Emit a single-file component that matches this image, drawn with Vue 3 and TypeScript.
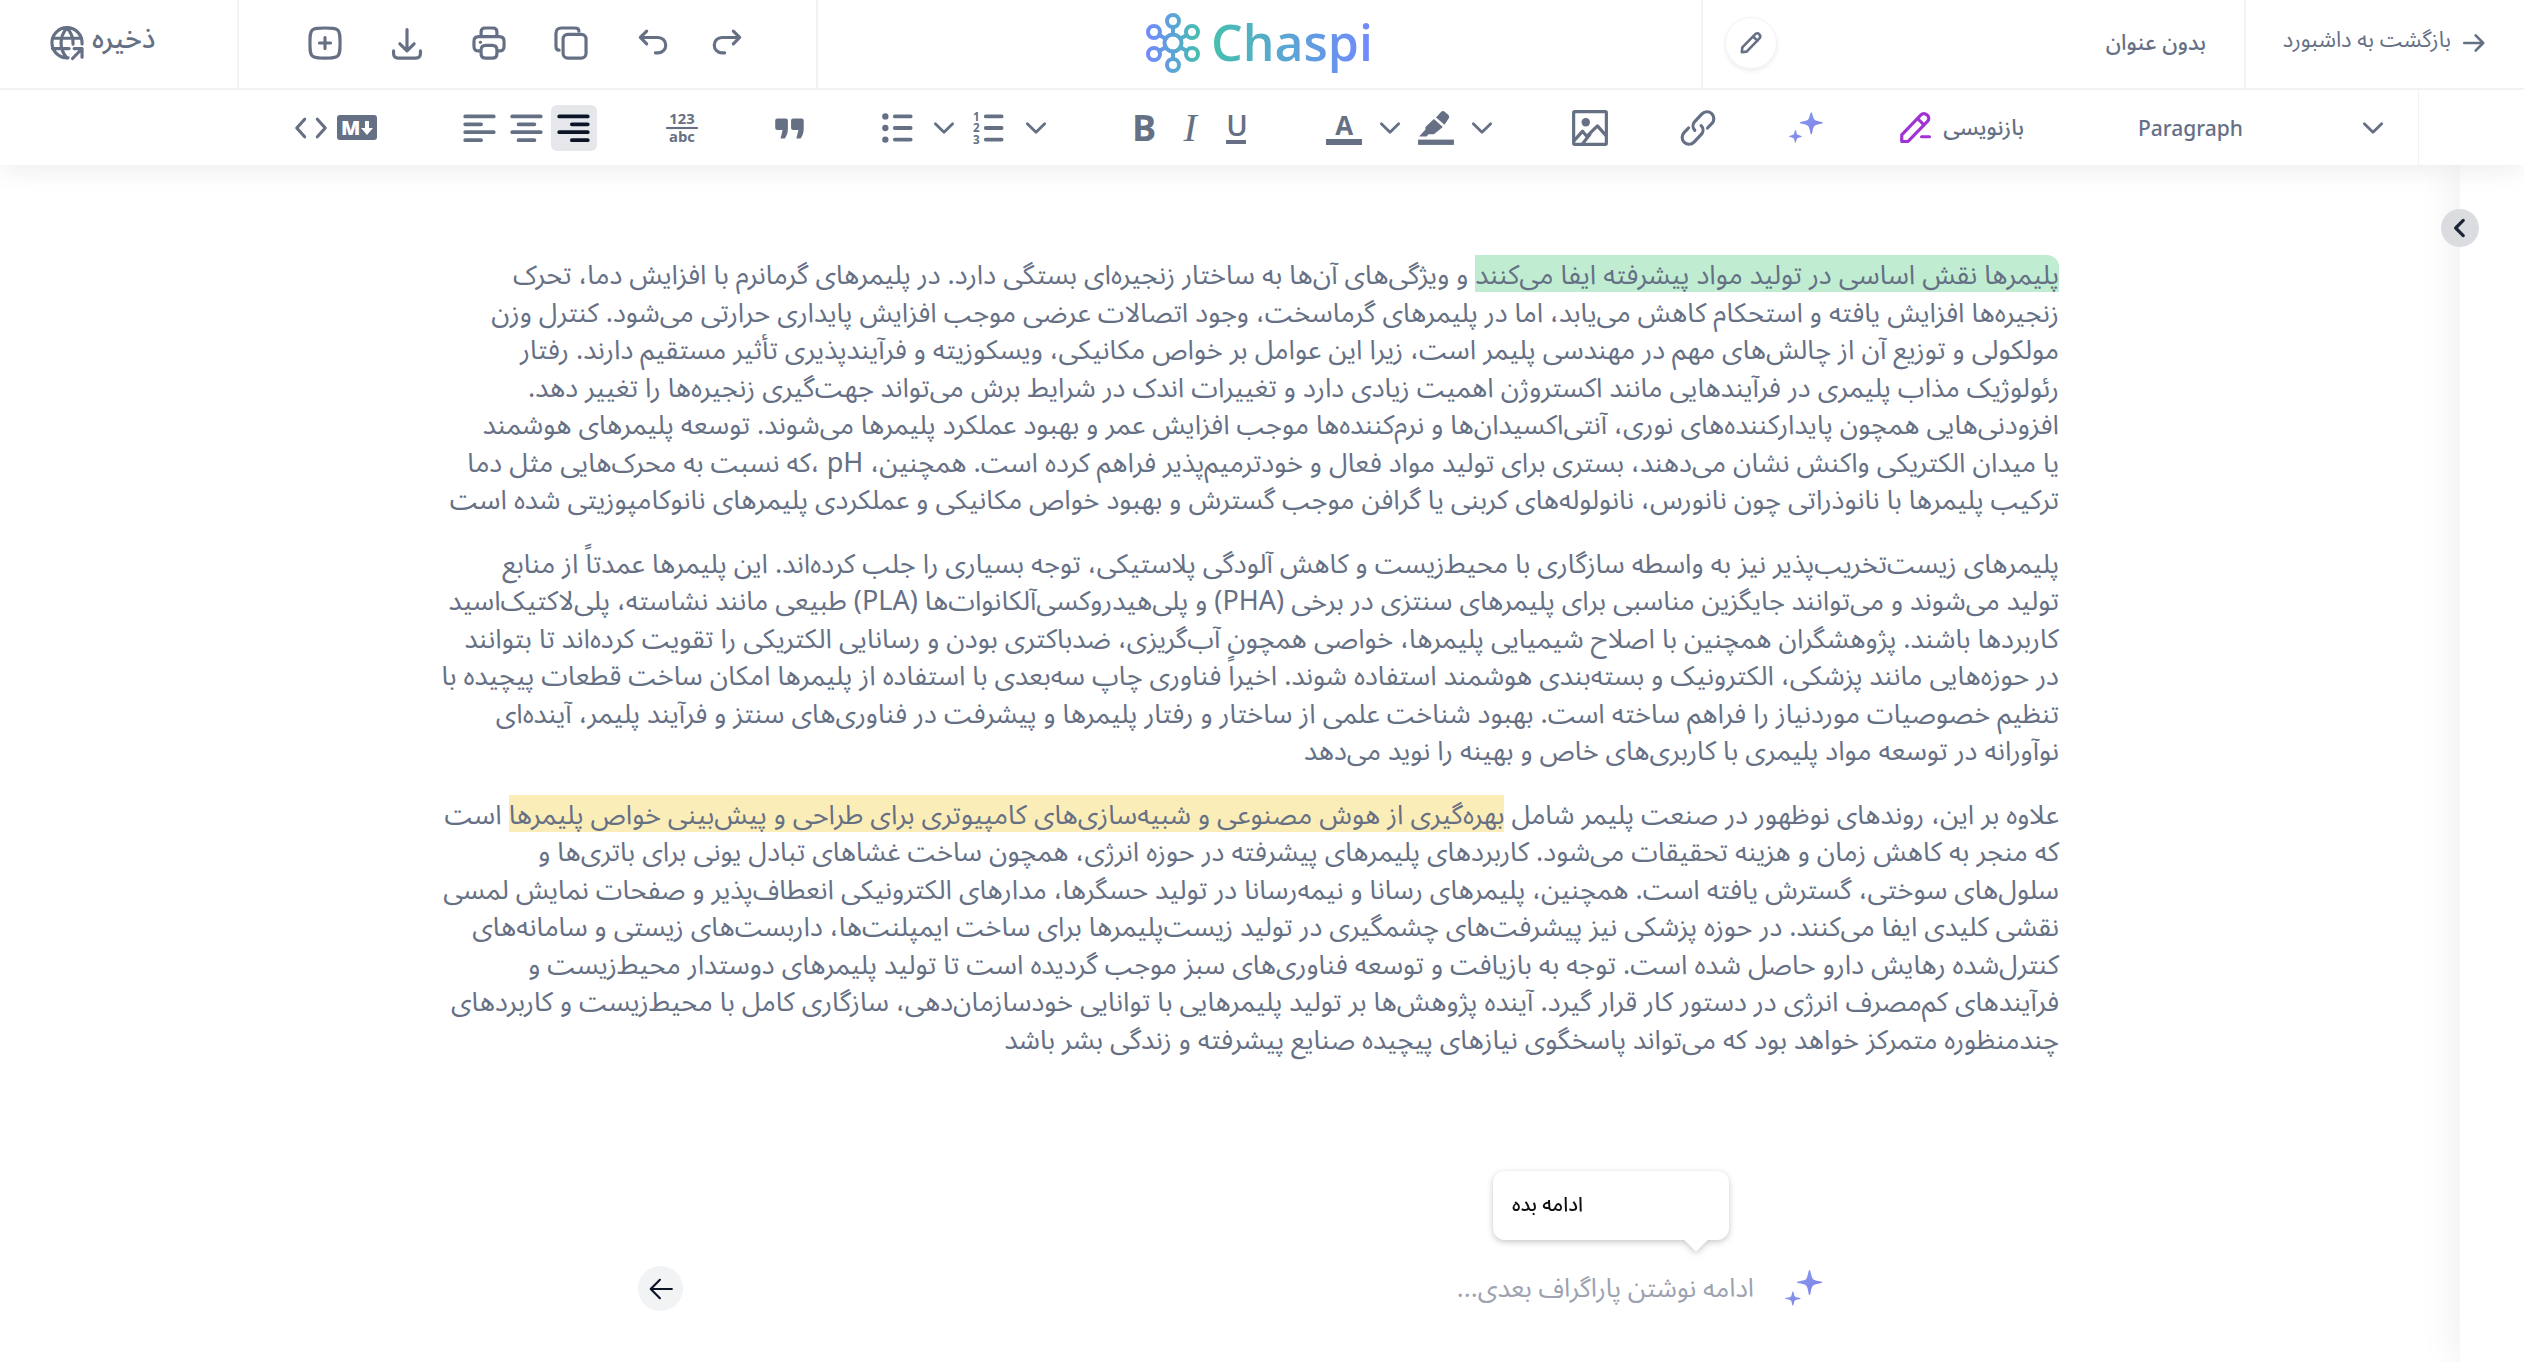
<script setup lang="ts">
import { ref } from 'vue'

type Mark = 'green' | 'yellow'
interface Segment {
  text: string
  mark?: Mark
}
type Line = Segment[]

const line = (text: string): Line => [{ text }]

const paragraphs: Line[][] = [
  [
    [
      { text: 'پلیمرها نقش اساسی در تولید مواد پیشرفته ایفا می‌کنند', mark: 'green' },
      { text: ' و ویژگی‌های آن‌ها به ساختار زنجیره‌ای بستگی دارد. در پلیمرهای گرمانرم با افزایش دما، تحرک' },
    ],
    line('زنجیره‌ها افزایش یافته و استحکام کاهش می‌یابد، اما در پلیمرهای گرماسخت، وجود اتصالات عرضی موجب افزایش پایداری حرارتی می‌شود. کنترل وزن'),
    line('مولکولی و توزیع آن از چالش‌های مهم در مهندسی پلیمر است، زیرا این عوامل بر خواص مکانیکی، ویسکوزیته و فرآیندپذیری تأثیر مستقیم دارند. رفتار'),
    line('رئولوژیک مذاب پلیمری در فرآیندهایی مانند اکستروژن اهمیت زیادی دارد و تغییرات اندک در شرایط برش می‌تواند جهت‌گیری زنجیره‌ها را تغییر دهد.'),
    line('افزودنی‌هایی همچون پایدارکننده‌های نوری، آنتی‌اکسیدان‌ها و نرم‌کننده‌ها موجب افزایش عمر و بهبود عملکرد پلیمرها می‌شوند. توسعه پلیمرهای هوشمند'),
    line('یا میدان الکتریکی واکنش نشان می‌دهند، بستری برای تولید مواد فعال و خودترمیم‌پذیر فراهم کرده است. همچنین، pH ،که نسبت به محرک‌هایی مثل دما'),
    line('ترکیب پلیمرها با نانوذراتی چون نانورس، نانولوله‌های کربنی یا گرافن موجب گسترش و بهبود خواص مکانیکی و عملکردی پلیمرهای نانوکامپوزیتی شده است'),
  ],
  [
    line('پلیمرهای زیست‌تخریب‌پذیر نیز به واسطه سازگاری با محیط‌زیست و کاهش آلودگی پلاستیکی، توجه بسیاری را جلب کرده‌اند. این پلیمرها عمدتاً از منابع'),
    line('تولید می‌شوند و می‌توانند جایگزین مناسبی برای پلیمرهای سنتزی در برخی (PHA) و پلی‌هیدروکسی‌آلکانوات‌ها (PLA) طبیعی مانند نشاسته، پلی‌لاکتیک‌اسید'),
    line('کاربردها باشند. پژوهشگران همچنین با اصلاح شیمیایی پلیمرها، خواصی همچون آب‌گریزی، ضدباکتری بودن و رسانایی الکتریکی را تقویت کرده‌اند تا بتوانند'),
    line('در حوزه‌هایی مانند پزشکی، الکترونیک و بسته‌بندی هوشمند استفاده شوند. اخیراً فناوری چاپ سه‌بعدی با استفاده از پلیمرها امکان ساخت قطعات پیچیده با'),
    line('تنظیم خصوصیات موردنیاز را فراهم ساخته است. بهبود شناخت علمی از ساختار و رفتار پلیمرها و پیشرفت در فناوری‌های سنتز و فرآیند پلیمر، آینده‌ای'),
    line('نوآورانه در توسعه مواد پلیمری با کاربری‌های خاص و بهینه را نوید می‌دهد'),
  ],
  [
    [
      { text: 'علاوه بر این، روندهای نوظهور در صنعت پلیمر شامل ' },
      { text: 'بهره‌گیری از هوش مصنوعی و شبیه‌سازی‌های کامپیوتری برای طراحی و پیش‌بینی خواص پلیمرها', mark: 'yellow' },
      { text: ' است' },
    ],
    line('که منجر به کاهش زمان و هزینه تحقیقات می‌شود. کاربردهای پلیمرهای پیشرفته در حوزه انرژی، همچون ساخت غشاهای تبادل یونی برای باتری‌ها و'),
    line('سلول‌های سوختی، گسترش یافته است. همچنین، پلیمرهای رسانا و نیمه‌رسانا در تولید حسگرها، مدارهای الکترونیکی انعطاف‌پذیر و صفحات نمایش لمسی'),
    line('نقشی کلیدی ایفا می‌کنند. در حوزه پزشکی نیز پیشرفت‌های چشمگیری در تولید زیست‌پلیمرها برای ساخت ایمپلنت‌ها، داربست‌های زیستی و سامانه‌های'),
    line('کنترل‌شده رهایش دارو حاصل شده است. توجه به بازیافت و توسعه فناوری‌های سبز موجب گردیده است تا تولید پلیمرهای دوستدار محیط‌زیست و'),
    line('فرآیندهای کم‌مصرف انرژی در دستور کار قرار گیرد. آینده پژوهش‌ها بر تولید پلیمرهایی با توانایی خودسازمان‌دهی، سازگاری کامل با محیط‌زیست و کاربردهای'),
    line('چندمنظوره متمرکز خواهد بود که می‌تواند پاسخگوی نیازهای پیچیده صنایع پیشرفته و زندگی بشر باشد'),
  ],
]

const title = ref('بدون عنوان')
const prompt = ref('')
const block = ref('Paragraph')
const align = ref('right')
</script>

<template>
  <div class="app">
    <header class="topbar">
      <div class="cell save-cell">
        <button class="save">
          <svg class="i36" viewBox="0 0 24 24">
            <path d="M12.7 21.3A9.5 9.5 0 1 1 21.5 12v.6M2.8 9h18.4M2.8 15.500h10.500M12 2.500c-5 5.500-5 13.500 0 19M12 2.500c2.800 3 4 6.500 3.800 10.200M15.500 21.800l5.800-6M16.500 15.500h5v5.500" />
          </svg>
          <span>ذخیره</span>
        </button>
      </div>
      <div class="cell actions">
        <button aria-label="New">
          <svg class="i36" viewBox="0 0 24 24"><path d="M2.5 12c0-4.500 0-6.700 1.400-8.100S7.500 2.500 12 2.500s6.700 0 8.100 1.400S21.500 7.500 21.500 12s0 6.700-1.400 8.100-3.600 1.400-8.100 1.400-6.700 0-8.100-1.400S2.500 16.500 2.500 12ZM12 8.500v7M8.500 12h7" /></svg>
        </button>
        <button aria-label="Download">
          <svg class="i36" viewBox="0 0 24 24"><path d="M12 3.500v13.500M7.500 12.500 12 17l4.500-4.500M3.500 17v1.500c0 2 1 3 3 3h11c2 0 3-1 3-3V17" /></svg>
        </button>
        <button aria-label="Print">
          <svg class="i36" viewBox="0 0 24 24"><path d="M7 8V5c0-1.700.8-2.500 2.500-2.500h5C16.200 2.500 17 3.300 17 5v3M7 17H5.500c-2 0-3-1-3-3v-3c0-2 1-3 3-3h13c2 0 3 1 3 3v3c0 2-1 3-3 3H17M10 13.500h4c2 0 3 1 3 3V19c0 1.700-.8 2.500-2.500 2.500h-5C7.800 21.500 7 20.700 7 19v-2.500c0-2 1-3 3-3ZM6.500 11.500h.2" /></svg>
        </button>
        <button aria-label="Copy">
          <svg class="i36" viewBox="0 0 24 24"><rect x="7" y="6.500" width="14.500" height="15" rx="3" /><path d="M17 4.500c0-1.300-.8-2-2.500-2H6c-2.300 0-3.500 1.200-3.500 3.500v8c0 1.700.7 2.500 2 2.500" /></svg>
        </button>
        <button aria-label="Undo">
          <svg class="i36" viewBox="0 0 24 24"><path d="M4.500 8.500h10.700a4.800 4.800 0 0 1 0 9.700h-1.700M8 4.500l-4 4 4 4" /></svg>
        </button>
        <button class="redo" aria-label="Redo">
          <svg class="i36" viewBox="0 0 24 24"><path d="M19.500 8.500H8.800a4.800 4.800 0 0 0 0 9.700h1.700M16 4.500l4 4-4 4" /></svg>
        </button>
      </div>
      <div class="cell brand">
        <svg class="mark" viewBox="0 0 54 60">
          <defs>
            <linearGradient id="molecule" x1="0" y1="0" x2="54" y2="0" gradientUnits="userSpaceOnUse">
              <stop offset="0" stop-color="#7388ff" />
              <stop offset="1" stop-color="#45bfae" />
            </linearGradient>
          </defs>
          <g fill="none" stroke="url(#molecule)" stroke-width="4">
            <circle cx="27" cy="30" r="8.500" />
            <circle cx="27" cy="8" r="6" />
            <circle cx="27" cy="52" r="6" />
            <circle cx="8" cy="19" r="6" />
            <circle cx="46" cy="19" r="6" />
            <circle cx="8" cy="41" r="6" />
            <circle cx="46" cy="41" r="6" />
            <path d="M26.990 14v7.500M26.990 38.500V46M13.200 22l6.400 3.700M34.400 34.300l6.400 3.700M13.200 38l6.400-3.700M34.400 25.700l6.400-3.700" />
          </g>
        </svg>
        <span class="wordmark">Chaspi</span>
      </div>
      <div class="cell title-cell">
        <button class="rename" aria-label="Rename">
          <svg class="i26" viewBox="0 0 24 24"><path d="M3.500 20.500 4 16 15.500 4.300c1.500-1.600 3-1.600 4.200-.3s1.200 2.700-.3 4.200L8 20l-4.500.5ZM14 6l4 4" /></svg>
        </button>
        <input v-model="title" class="title" dir="rtl" aria-label="Title" />
      </div>
      <div class="cell back-cell">
        <a class="back" href="#">
          <span>بازگشت به داشبورد</span>
          <svg class="i26" viewBox="0 0 24 24"><path d="M3 12h17.500M13.500 5l7 7-7 7" /></svg>
        </a>
      </div>
    </header>

    <nav class="toolbar">
      <div class="group source">
        <button aria-label="Source"><svg class="i36" viewBox="0 0 24 24"><path d="M8 6.500 3 12l5 5.500M16 6.500l5 5.500-5 5.500" /></svg></button>
        <button aria-label="Markdown">
          <svg class="md" viewBox="0 0 40 26">
            <rect class="solid" width="40" height="25" rx="3" />
            <text class="knock" x="4" y="20" font-size="20" font-weight="800">M</text>
            <path class="knock" d="M28 6h4v7h4l-6 7-6-7h4Z" />
          </svg>
        </button>
      </div>
      <div class="group aligns">
        <button aria-label="Align left" @click="align = 'left'"><svg class="i36 heavy" viewBox="0 0 36 36"><path d="M4 7h27M4 14.500h15M4 22h27M4 29.500h15" /></svg></button>
        <button aria-label="Align center" @click="align = 'center'"><svg class="i36 heavy" viewBox="0 0 36 36"><path d="M4 7h27M10 14.500h15M4 22h27M10 29.500h15" /></svg></button>
        <button :class="{ active: align === 'right' }" aria-label="Align right" @click="align = 'right'"><svg class="i36 heavy" viewBox="0 0 36 36"><path d="M4 7h27M16 14.500h15M4 22h27M16 29.500h15" /></svg></button>
      </div>
      <div class="group">
        <button aria-label="Numerals">
          <svg class="i36" viewBox="0 0 36 36">
            <text x="18" y="14" font-size="14" font-weight="700" text-anchor="middle">123</text>
            <rect class="solid" x="3" y="17" width="30" height="2" />
            <text x="18" y="31" font-size="14" font-weight="700" text-anchor="middle">abc</text>
          </svg>
        </button>
      </div>
      <div class="group">
        <button aria-label="Quote"><svg class="i36" viewBox="0 0 36 36"><path class="solid" d="M6 9h8a2 2 0 0 1 2 2v8c0 4-1.500 7-3 9H9l2-8H6a2 2 0 0 1-2-2v-7a2 2 0 0 1 2-2ZM21 9h8a2 2 0 0 1 2 2v8c0 4-1.500 7-3 9h-4l2-8h-5a2 2 0 0 1-2-2v-7a2 2 0 0 1 2-2Z" /></svg></button>
      </div>
      <div class="group">
        <button aria-label="Bulleted list">
          <svg class="i36 heavy" viewBox="0 0 36 36"><path d="M15 7h15M15 18h15M15 29h15" /><circle class="solid" cx="6" cy="7" r="3" /><circle class="solid" cx="6" cy="18" r="3" /><circle class="solid" cx="6" cy="29" r="3" /></svg>
        </button>
        <button aria-label="Bullet styles"><svg class="i26 chevron" viewBox="0 0 24 24"><path d="m4 8 8 8 8-8" /></svg></button>
        <button aria-label="Numbered list">
          <svg class="i36 heavy" viewBox="0 0 36 36"><path d="M14 7h15M14 18h15M14 29h15" /><text x="2" y="11" font-size="11" font-weight="700">1</text><text x="2" y="22" font-size="11" font-weight="700">2</text><text x="2" y="33" font-size="11" font-weight="700">3</text></svg>
        </button>
        <button aria-label="Number styles"><svg class="i26 chevron" viewBox="0 0 24 24"><path d="m4 8 8 8 8-8" /></svg></button>
      </div>
      <div class="group">
        <button class="bold" aria-label="Bold">B</button>
        <button class="italic" aria-label="Italic">I</button>
        <button class="underline" aria-label="Underline">
          <span>U</span>
        </button>
      </div>
      <div class="group">
        <button class="ink" aria-label="Text colour">
          <span>A</span>
        </button>
        <button aria-label="Text colours"><svg class="i26 chevron" viewBox="0 0 24 24"><path d="m4 8 8 8 8-8" /></svg></button>
        <button aria-label="Highlight">
          <svg class="i36" viewBox="0 0 36 36">
            <path class="solid" d="m16 9.500 8.500 7.500L16 24l-5 0-2 2H2l6-6.500V17ZM18 8l4.500-5c1.500-1.300 2.700-1.300 4-.2l3 2.700c1.300 1.300 1.300 2.500.2 3.900L26 15Z" />
            <rect class="solid" x="1" y="29" width="34" height="5" />
          </svg>
        </button>
        <button aria-label="Highlight colours"><svg class="i26 chevron" viewBox="0 0 24 24"><path d="m4 8 8 8 8-8" /></svg></button>
      </div>
      <div class="group">
        <button aria-label="Image">
          <svg class="i36 picture" viewBox="0 0 36 36"><rect x="2.500" y="2.500" width="31" height="31" rx="1" /><circle class="solid" cx="14" cy="12.500" r="4" /><path d="m3 30 8-9 4 5 10-10 8 9M11 33l7-9" /></svg>
        </button>
      </div>
      <div class="group">
        <button aria-label="Link">
          <svg class="i36" viewBox="0 0 24 24"><path d="M10 13.500a4 4 0 0 1-.2-5.400l4.700-5a4.300 4.300 0 0 1 6.300 6L18 12M14 10.500a4 4 0 0 1 .2 5.400l-4.700 5a4.300 4.300 0 0 1-6.300-6L6 12" /></svg>
        </button>
      </div>
      <div class="group">
        <button aria-label="Assistant">
          <svg class="i36" viewBox="0 0 36 36">
            <defs>
              <linearGradient id="spark" x1="0" y1="0" x2="1" y2="1">
                <stop offset="0" stop-color="#86a8f2" />
                <stop offset="1" stop-color="#7f74e8" />
              </linearGradient>
            </defs>
            <path class="spark" d="M23 3c1.200 0 1.300 5 3 7s8 1.800 8 3-6 1.200-8 3-1.800 8-3 8-1-6-3-8-8-1.800-8-3 6.500-1.200 8-3 1.800-7 3-7ZM8 20c.8 0 .9 3.200 1.800 4.200S14 25.200 14 26s-3.200.8-4.200 1.800S8.800 32 8 32s-.8-3.200-1.800-4.200S2 26.800 2 26s3.200-.8 4.200-1.800S7.200 20 8 20Z" />
          </svg>
        </button>
      </div>
      <button class="rewrite">
        <svg class="i36" viewBox="0 0 24 24"><path d="M3 20.500v-4.200L14.800 4c1.500-1.500 2.800-1.500 4.200-.2s1.500 2.800.1 4.200L7 20.500ZM13 6l4 4M15.500 17.500h5" /></svg>
        <span>بازنویسی</span>
      </button>
      <div class="picker">
        <select v-model="block" aria-label="Block style">
          <option>Paragraph</option>
        </select>
        <svg class="i26 chevron" viewBox="0 0 24 24"><path d="m4 8 8 8 8-8" /></svg>
      </div>
    </nav>

    <div class="workspace">
      <main class="page">
        <article class="document" dir="rtl">
          <p v-for="(lines, p) in paragraphs" :key="p">
            <span v-for="(segments, l) in lines" :key="l" class="line"><span v-for="(s, i) in segments" :key="i" :class="[s.mark, { opening: p === 0 && l === 0 && i === 0 }]">{{ s.text }}</span></span>
          </p>
        </article>
        <form class="composer" @submit.prevent>
          <button class="send" aria-label="Send"><svg class="i26" viewBox="0 0 24 24"><path d="M22 12H2.500M11 3.500 2.500 12l8.500 8.500" /></svg></button>
          <input v-model="prompt" dir="rtl" placeholder="ادامه نوشتن پاراگراف بعدی..." aria-label="ادامه نوشتن" />
          <div class="assist">
            <button type="button" aria-label="Suggestions">
              <svg class="i40" viewBox="0 0 36 36"><path class="spark" d="M23 1c1.200 0 1.300 6 3 8s8.500 1.800 8.500 3-6.500 1.200-8.500 3-1.800 8.500-3 8.500-1-6.500-3-8.500-8.500-1.800-8.500-3 7-1.200 8.500-3 1.800-8 3-8ZM8 20c.8 0 .9 3.700 1.800 4.700s5.200 1 5.200 1.800-4.200.8-5.200 1.800S8.800 33 8 33s-.8-3.700-1.800-4.700-5.200-1-5.200-1.800 4.200-.8 5.200-1.800S7.200 20 8 20Z" /></svg>
            </button>
            <button type="button" class="suggestion">ادامه بده</button>
          </div>
        </form>
      </main>
      <aside class="rail">
        <button class="collapse" aria-label="Open panel"><svg class="i26" viewBox="0 0 24 24"><path d="m15 5-7 7 7 7" /></svg></button>
      </aside>
    </div>
  </div>
</template>

<style>
body {
  background: #fff;
}
</style>

<style scoped>
.app {
  min-height: 100vh;
  display: flex;
  flex-direction: column;
  font-family: 'Noto Sans', 'Noto Sans Arabic', 'DejaVu Sans', sans-serif;
  font-size: 22px;
  color: #667085;
}

button,
input,
select {
  font: inherit;
  color: inherit;
  background: none;
  border: 0;
  padding: 0;
  margin: 0;
  outline: 0;
}

button {
  display: flex;
  align-items: center;
  justify-content: center;
  cursor: pointer;
}

svg {
  display: block;
  flex: none;
  fill: none;
  stroke: currentColor;
  stroke-width: 2;
  stroke-linecap: round;
  stroke-linejoin: round;
}

svg text,
.solid {
  fill: currentColor;
  stroke: none;
}

svg text {
  font-family: 'Open Sans', sans-serif;
}

.md .knock {
  fill: #fff;
  stroke: none;
}

.spark {
  fill: url(#spark);
  stroke: none;
}

.i26 {
  width: 26px;
  height: 26px;
  stroke-width: 2.4;
}

.i36 {
  width: 38px;
  height: 38px;
}

.i40 {
  width: 40px;
  height: 40px;
}

.i36.heavy {
  stroke-width: 3.6;
}

.i36.picture {
  stroke-width: 3;
}

.chevron {
  stroke-width: 2.6;
}

.md {
  width: 40px;
  height: 26px;
}

.topbar {
  position: relative;
  z-index: 3;
  display: flex;
  height: 88px;
  border-bottom: 2px solid #f2f2f3;
  background: #fff;
}

.cell {
  display: flex;
  align-items: center;
  box-sizing: border-box;
  padding-bottom: 3px;
  border-left: 2px solid #f2f2f3;
}

.save-cell {
  width: 237px;
  padding-left: 48px;
  border-left: 0;
}

.save {
  gap: 6px;
  font-size: 28px;
  font-weight: 500;
}

.save span,
.back span {
  padding-bottom: 6px;
}

.actions {
  width: 579px;
  padding-left: 67px;
  gap: 44px;
}

.redo {
  margin-left: -8px;
}

.brand {
  flex: 1;
  justify-content: center;
  gap: 11px;
}

.mark {
  width: 54px;
  height: 60px;
}

.wordmark {
  padding-bottom: 2px;
  font: 600 50px/60px 'Open Sans', sans-serif;
  background: linear-gradient(90deg, #45bfae, #7388ff);
  background-clip: text;
  color: transparent;
}

.title-cell {
  width: 543px;
  padding-left: 22px;
  padding-right: 38px;
  justify-content: space-between;
}

.rename {
  width: 52px;
  height: 52px;
  flex: none;
  border: 1px solid #f2f2f3;
  border-radius: 50%;
  box-shadow: 0 2px 4px rgba(16, 24, 40, 0.08);
}

.title {
  min-width: 0;
  flex: 1;
  font-weight: 500;
}

.back-cell {
  width: 280px;
  justify-content: flex-end;
  padding-right: 37px;
}

.back {
  display: flex;
  align-items: center;
  gap: 10px;
  color: inherit;
  font-weight: 400;
  text-decoration: none;
  white-space: nowrap;
}

.toolbar {
  position: relative;
  z-index: 2;
  display: flex;
  justify-content: flex-end;
  align-items: center;
  gap: 62px;
  height: 75px;
  padding-right: 105px;
  background: #fff;
  box-shadow: 0 2px 30px rgba(0, 0, 0, 0.09);
}

.group {
  display: flex;
}

.group button {
  width: 46px;
  height: 46px;
}

.source {
  width: 107px;
}

.aligns {
  gap: 1px;
}

.group .active {
  background: #e5e7ea;
  border-radius: 6px;
  color: #0b1426;
}

.group .bold {
  font: 700 36px/46px 'Open Sans', sans-serif;
}

.group .italic {
  font: italic 400 40px/46px 'Liberation Serif', serif;
}

.underline span {
  width: 20px;
  height: 28px;
  border-bottom: 4px solid;
  font: 600 29px/26px 'Open Sans', sans-serif;
}

.ink span {
  width: 36px;
  height: 28px;
  border-bottom: 6px solid;
  font: 700 26px/28px 'Open Sans', sans-serif;
}

.rewrite {
  gap: 8px;
  margin-left: 6px;
  font-weight: 500;
}

.rewrite svg {
  color: #a033d6;
}

.picker {
  position: relative;
  display: flex;
  align-items: center;
  width: 332px;
  height: 75px;
  border-right: 1px solid #f2f2f3;
}

.picker select {
  appearance: none;
  width: 100%;
  height: 100%;
  padding-left: 52px;
  font-size: 21px;
  font-weight: 500;
}

.picker svg {
  position: absolute;
  right: 32px;
  pointer-events: none;
}

.workspace {
  display: flex;
  flex: 1;
}

.page {
  flex: 1;
  padding: 90px 401px 50px 420px;
}

.document {
  font-size: 27px;
  line-height: 1.39;
}

.document p {
  margin: 0 0 26px;
}

.line {
  display: block;
  white-space: nowrap;
}

.green {
  background: #c0edd2;
}

.yellow {
  background: #fbedb8;
}

.opening {
  border-start-start-radius: 12px;
}

.composer {
  display: flex;
  align-items: center;
  gap: 30px;
  margin: 209px 235px 0 218px;
}

.composer input {
  flex: 1;
  min-width: 0;
  height: 45px;
  padding-bottom: 4px;
  box-sizing: border-box;
  font-size: 26px;
}

.composer input::placeholder {
  color: #9ca3af;
  opacity: 1;
}

.send {
  width: 45px;
  height: 45px;
  border-radius: 50%;
  background: #f1f3f5;
  color: #0b1426;
}

.send svg {
  stroke-width: 2;
}

.assist {
  position: relative;
}

.assist .suggestion {
  position: absolute;
  right: 95px;
  bottom: 69px;
  width: 236px;
  height: 69px;
  padding-left: 19px;
  justify-content: flex-start;
  border-radius: 12px;
  background: #fff;
  filter: drop-shadow(0 2px 3px rgba(0, 0, 0, 0.22));
  color: #101010;
  font-size: 20px;
  font-weight: 500;
}

.suggestion::after {
  content: '';
  position: absolute;
  right: 21px;
  top: 100%;
  width: 24px;
  height: 12px;
  background: #fff;
  clip-path: polygon(0 0, 100% 0, 50% 100%);
}

.rail {
  position: relative;
  width: 64px;
  background: #fff;
  box-shadow: -2px 0 40px rgba(0, 0, 0, 0.08);
}

.collapse {
  position: absolute;
  top: 44px;
  left: -19px;
  width: 38px;
  height: 38px;
  border-radius: 50%;
  background: #dadcdf;
  color: #1d2636;
}

.collapse svg {
  stroke-width: 3;
}
</style>
